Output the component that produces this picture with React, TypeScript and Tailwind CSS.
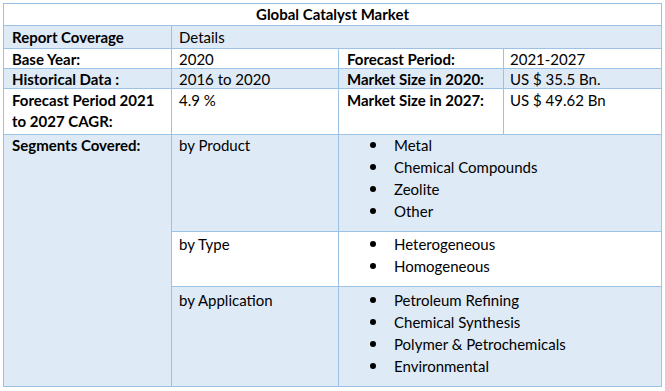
const font = { fontFamily: "Lato, 'Open Sans', sans-serif" };

function Bullets({ items, className = "" }: { items: string[]; className?: string }) {
  return (
    <ul className={`m-0 list-none p-0 ${className}`}>
      {items.map((t) => (
        <li key={t} className="flex h-[22px] items-center">
          <span className="ml-[31px] h-[6px] w-[6px] shrink-0 rounded-full bg-black" />
          <span className="ml-[18px]">{t}</span>
        </li>
      ))}
    </ul>
  );
}

export default function App() {
  const blue = "bg-[#deeaf6]";
  const white = "bg-white";
  return (
    <div className="h-[391px] w-[665px] bg-white pl-[3px] pt-[3px] text-[15px] leading-[20px] text-black" style={font}>
      <div className="grid w-[659px] grid-cols-[167px_166px_164px_157px] grid-rows-[21px_22px_19px_19px_45px_96px_54px_99px] gap-px bg-[#9cc2e5] p-px">
        {/* Title */}
        <div className={`${white} col-span-4 text-center font-bold`}>Global Catalyst Market</div>

        {/* Report coverage */}
        <div className={`${blue} pl-[8px] pt-[1px] font-bold`}>Report Coverage</div>
        <div className={`${blue} col-span-3 pl-[7px] pt-[1px]`}>Details</div>

        {/* Base year */}
        <div className={`${white} pl-[8px] font-bold`}>Base Year:</div>
        <div className={`${white} pl-[7px]`}>2020</div>
        <div className={`${white} pl-[8px] font-bold`}>Forecast Period:</div>
        <div className={`${white} pl-[6px]`}>2021-2027</div>

        {/* Historical */}
        <div className={`${blue} pl-[8px] font-bold`}>Historical Data :</div>
        <div className={`${blue} pl-[7px]`}>2016 to 2020</div>
        <div className={`${blue} pl-[8px] font-bold`}>Market Size in 2020:</div>
        <div className={`${blue} pl-[6px]`}>US $ 35.5 Bn.</div>

        {/* CAGR */}
        <div className={`${white} pl-[8px] pt-px font-bold leading-[21px]`}>
          Forecast Period 2021 to 2027 CAGR:
        </div>
        <div className={`${white} pl-[7px] pt-px leading-[21px]`}>4.9 %</div>
        <div className={`${white} pl-[8px] pt-px font-bold leading-[21px]`}>Market Size in 2027:</div>
        <div className={`${white} pl-[6px] pt-px leading-[21px]`}>US $ 49.62 Bn</div>

        {/* Segments */}
        <div className={`${blue} row-span-3 pl-[8px] font-bold`}>Segments Covered:</div>
        <div className={`${blue} pl-[7px]`}>by Product</div>
        <div className={`${blue} col-span-2`}>
          <Bullets className="-mt-px" items={["Metal", "Chemical Compounds", "Zeolite", "Other"]} />
        </div>

        <div className={`${white} pl-[7px] pt-[2px]`}>by Type</div>
        <div className={`${white} col-span-2 pt-px`}>
          <Bullets items={["Heterogeneous", "Homogeneous"]} />
        </div>

        <div className={`${blue} pl-[7px] pt-[3px]`}>by Application</div>
        <div className={`${blue} col-span-2 pt-[2px]`}>
          <Bullets
            items={[
              "Petroleum Refining",
              "Chemical Synthesis",
              "Polymer & Petrochemicals",
              "Environmental",
            ]}
          />
        </div>
      </div>
    </div>
  );
}
